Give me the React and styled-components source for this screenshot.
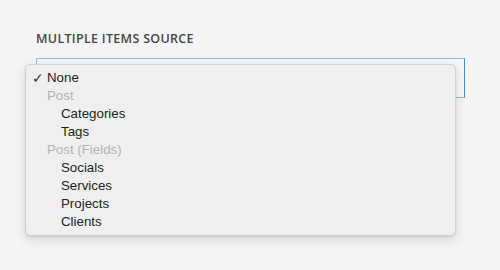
import React from 'react';
import styled, { createGlobalStyle } from 'styled-components';

const GlobalStyle = createGlobalStyle`
  html, body {
    margin: 0;
    padding: 0;
    background: #f4f4f4;
  }
`;

const Page = styled.div`
  width: 500px;
  height: 270px;
  padding: 33px 35px 0 36px;
  box-sizing: border-box;
  background: #f4f4f4;
`;

const Label = styled.div`
  font-family: 'Open Sans', 'Noto Sans', sans-serif;
  font-size: 12.5px;
  font-weight: 600;
  letter-spacing: 0.3px;
  color: #464646;
  text-transform: uppercase;
  line-height: 12px;
  margin-bottom: 13px;
`;

const Field = styled.div`
  position: relative;
  width: 429px;
  height: 40px;
  box-sizing: border-box;
  border: 1px solid #8cbdf0;
  border-right-color: #3d8ce8;
  background: #f6f6f6;
`;

const Menu = styled.ul`
  position: absolute;
  top: 5px;
  left: -12px;
  width: 431px;
  margin: 0;
  padding: 4px 0;
  list-style: none;
  box-sizing: border-box;
  background: #efefef;
  border: 1px solid #d2d2d2;
  border-radius: 5px;
  box-shadow: 0 4px 12px rgba(0, 0, 0, 0.12), 0 1px 2px rgba(0, 0, 0, 0.08);
  font-family: 'Liberation Sans', Arial, sans-serif;
  font-size: 13.3px;
`;

const Option = styled.li`
  position: relative;
  height: 18px;
  line-height: 18px;
  padding-left: ${p => (p.$indent ? 35 : 21)}px;
  color: ${p => (p.$group ? '#b3b3b3' : '#222222')};
`;

const Check = styled.span`
  position: absolute;
  left: 6px;
  top: 0;
  color: #333;
  font-size: 14px;
`;

const items = [
  { label: 'None', checked: true },
  { label: 'Post', group: true },
  { label: 'Categories', indent: true },
  { label: 'Tags', indent: true },
  { label: 'Post (Fields)', group: true },
  { label: 'Socials', indent: true },
  { label: 'Services', indent: true },
  { label: 'Projects', indent: true },
  { label: 'Clients', indent: true },
];

export default function App() {
  return (
    <>
      <GlobalStyle />
      <Page>
        <Label>Multiple Items Source</Label>
        <Field>
          <Menu>
            {items.map(item => (
              <Option key={item.label} $group={item.group} $indent={item.indent}>
                {item.checked && <Check>✓</Check>}
                {item.label}
              </Option>
            ))}
          </Menu>
        </Field>
      </Page>
    </>
  );
}
